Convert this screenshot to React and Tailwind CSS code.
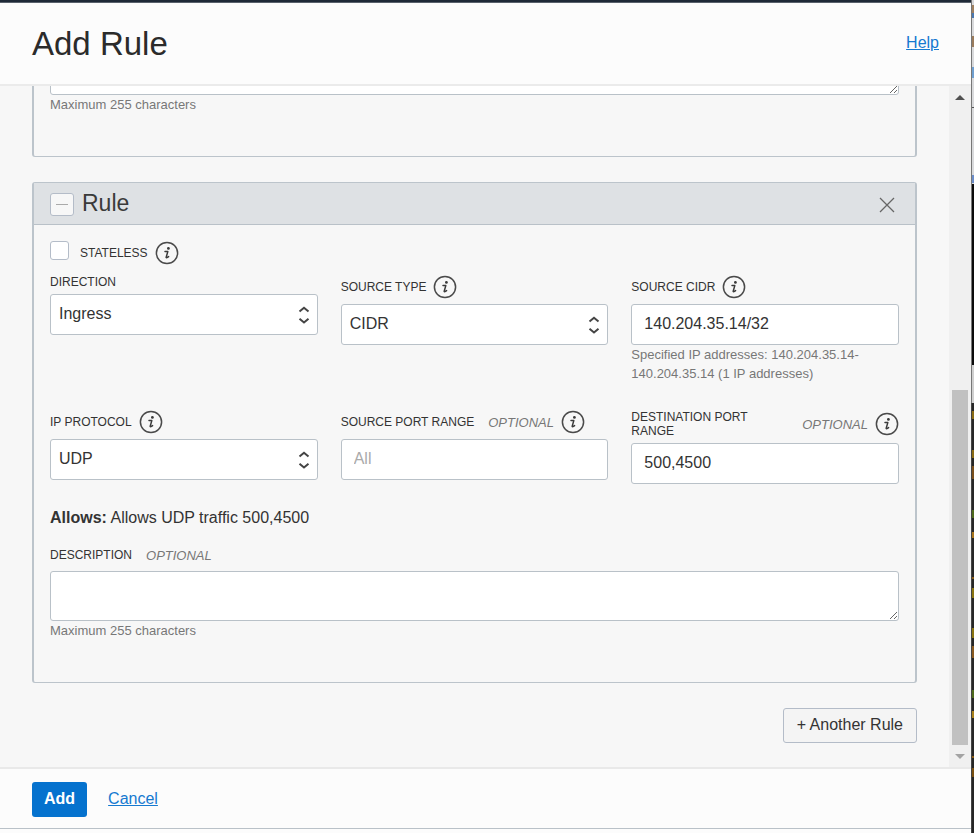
import React from "react";

function InfoButton({ label }) {
  return (
    <button
      type="button"
      aria-label={label}
      className="flex h-6 w-6 shrink-0 items-center justify-center"
    >
      <svg viewBox="0 0 24 24" className="h-6 w-6" aria-hidden="true">
        <circle cx="12" cy="12" r="10.6" fill="none" stroke="#4a4a4a" strokeWidth="1.5" />
        <circle cx="13.4" cy="7.4" r="1.4" fill="#3a3a3a" />
        <path
          d="M10 10.6 H12.8 L11.2 16.2 C11 17 11.8 17 13.6 15.6"
          fill="none"
          stroke="#3a3a3a"
          strokeWidth="1.5"
          strokeLinejoin="round"
          strokeLinecap="round"
        />
      </svg>
    </button>
  );
}

function Optional() {
  return <span className="text-[13px] leading-[15px] text-[#777] italic">OPTIONAL</span>;
}

function Field({ id, label, optional, info, help, children }) {
  return (
    <div>
      <div className="mb-[5px] flex items-center">
        <label htmlFor={id} className="text-xs leading-[14px] text-[#333]">
          {label}
        </label>
        {optional && (
          <span className="ml-3.5 flex">
            <Optional />
          </span>
        )}
        {info && (
          <span className="ml-[7px] flex">
            <InfoButton label={"About " + label.toLowerCase()} />
          </span>
        )}
      </div>
      {children}
      {help && <p className="text-[13px] leading-[19px] text-[#777]">{help}</p>}
    </div>
  );
}

function SelectBox({ id, options }) {
  return (
    <div className="relative">
      <select
        id={id}
        className="block h-[41px] w-full appearance-none rounded-[3px] border border-[#b9c1c8] bg-white pb-0.5 pl-2 text-base text-[#333]"
      >
        {options.map((o) => (
          <option key={o}>{o}</option>
        ))}
      </select>
      <svg
        viewBox="0 0 12 18"
        className="pointer-events-none absolute top-3 right-2 h-[18px] w-3"
        fill="none"
        stroke="#444"
        strokeWidth="2"
      >
        <path d="M1.5 5.5 L6 1.8 L10.5 5.5 M1.5 12.8 L6 16.5 L10.5 12.8" />
      </svg>
    </div>
  );
}

const inputClass =
  "block h-[41px] w-full rounded-[3px] border border-[#b9c1c8] bg-white pb-0.5 pl-3 text-base text-[#333] placeholder:text-[#aaa]";

function Description({ id, label }) {
  return (
    <div>
      <textarea
        id={id}
        aria-label={label}
        className="block h-[50px] w-full resize rounded-[3px] border border-[#b9c1c8] bg-white"
      />
      <p className="text-[13px] leading-[19px] text-[#777]">Maximum 255 characters</p>
    </div>
  );
}

/* Sliver of the window behind the panel: [top, height, colour] */
const backdrop = [
  [0, 184, "#d9dadc"],
  [5, 8, "#a08060"],
  [13, 5, "#4a78b0"],
  [36, 11, "#9a7b5c"],
  [67, 11, "#6f9fd0"],
  [107, 1, "#555"],
  [175, 8, "#6a8cc8"],
  [184, 181, "#0a0a0a"],
  [365, 38, "#cfcfcf"],
  [403, 430, "#262626"],
  [411, 8, "#8a6b14"],
  [450, 8, "#8a6b14"],
  [466, 13, "#7a4f1c"],
  [510, 8, "#4f6a1c"],
  [532, 6, "#a8741a"],
  [577, 2, "#8a5a14"],
  [588, 10, "#8a7410"],
  [628, 10, "#8a7410"],
  [646, 12, "#8a5a20"],
  [690, 8, "#4f6a1c"],
  [711, 7, "#a8801a"],
  [756, 2, "#8a5a14"],
  [768, 9, "#7a5010"],
];

export default function App() {
  return (
    <div className="flex h-screen bg-[#fcfcfc] font-['Liberation_Sans',Arial,sans-serif] text-[#333]">
      <div className="flex min-w-0 flex-1 flex-col">
        <div className="h-[3px] shrink-0 border-b border-[#59616c] bg-[#1f2937]" />
        <header className="flex h-[83px] shrink-0 items-center justify-between border-b-2 border-[#ebebeb] px-8">
          <h1 className="text-[33px] leading-10 text-[#2b2b2b]">Add Rule</h1>
          <a href="#help" className="mb-0.5 text-base text-[#1579d0] underline">
            Help
          </a>
        </header>

        <div className="flex min-h-0 flex-1 bg-[#f7f7f7]">
          <main className="flex min-w-0 flex-1 flex-col justify-end overflow-hidden px-8 pb-6">
            <section className="shrink-0 rounded-[3px] border-x-2 border-y border-[#bcc4cb] px-4 pb-[42px]">
              <Description id="previous-description" label="Previous rule description" />
            </section>

            <section className="mt-[25px] shrink-0 rounded-[3px] border-x-2 border-y border-[#bcc4cb]">
              <div className="flex h-[42px] items-center justify-between border-b border-[#b9c1c8] bg-[#dee1e4] px-4">
                <div className="flex items-center gap-2">
                  <button
                    type="button"
                    aria-label="Collapse rule"
                    className="mt-0.5 flex h-[23px] w-6 items-center justify-center rounded-[3px] border border-[#b4bcc8] bg-[#f7f7f7]"
                  >
                    <span className="h-px w-3 bg-[#aaa]" />
                  </button>
                  <h2 className="mb-0.5 text-[23px] leading-7 text-[#3a3a3a]">Rule</h2>
                </div>
                <button type="button" aria-label="Remove rule" className="mt-0.5 mr-1">
                  <svg viewBox="0 0 16 16" className="h-4 w-4" fill="none" stroke="#666" strokeWidth="1.3">
                    <path d="M1 1 L15 15 M15 1 L1 15" />
                  </svg>
                </button>
              </div>

              <div className="px-4 pt-4 pb-[42px]">
                <div className="mb-2.5 flex h-6 items-center">
                  <input
                    id="stateless"
                    type="checkbox"
                    className="h-[19px] w-[19px] appearance-none self-start rounded-[3px] border border-[#b4bcc8] bg-white"
                  />
                  <label htmlFor="stateless" className="mr-[7px] ml-[11px] text-xs text-[#333]">
                    STATELESS
                  </label>
                  <InfoButton label="About stateless rules" />
                </div>

                <div className="grid grid-cols-3 gap-x-[23px] gap-y-[27px]">
                  <Field id="direction" label="DIRECTION">
                    <SelectBox id="direction" options={["Ingress", "Egress"]} />
                  </Field>
                  <Field id="source-type" label="SOURCE TYPE" info>
                    <SelectBox id="source-type" options={["CIDR", "Service"]} />
                  </Field>
                  <Field
                    id="source-cidr"
                    label="SOURCE CIDR"
                    info
                    help="Specified IP addresses: 140.204.35.14-140.204.35.14 (1 IP addresses)"
                  >
                    <input id="source-cidr" type="text" defaultValue="140.204.35.14/32" className={inputClass} />
                  </Field>
                  <Field id="ip-protocol" label="IP PROTOCOL" info>
                    <SelectBox id="ip-protocol" options={["UDP", "TCP", "ICMP"]} />
                  </Field>
                  <Field id="source-port" label="SOURCE PORT RANGE" optional info>
                    <input id="source-port" type="text" placeholder="All" className={inputClass} />
                  </Field>
                  <Field id="destination-port" label="DESTINATION PORT RANGE" optional info>
                    <input id="destination-port" type="text" defaultValue="500,4500" className={inputClass} />
                  </Field>
                </div>

                <p className="mt-[22px] text-base">
                  <strong>Allows:</strong> Allows UDP traffic 500,4500
                </p>

                <div className="mt-[18px] mb-2 flex items-center gap-3.5">
                  <label htmlFor="description" className="text-xs leading-[15px]">
                    DESCRIPTION
                  </label>
                  <Optional />
                </div>
                <Description id="description" label="Description" />
              </div>
            </section>

            <button
              type="button"
              className="mt-[25px] h-[35px] shrink-0 self-end rounded-[3px] border border-[#b4bcc8] bg-[#f4f4f4] px-[13px] pb-0.5 text-base"
            >
              + Another Rule
            </button>
          </main>

          <div className="flex w-[22px] shrink-0 flex-col items-center bg-[#f0f0f0]">
            <div className="flex h-[22px] items-center">
              <svg viewBox="0 0 10 5" className="h-[5px] w-2.5">
                <path d="M5 0 L10 5 H0 Z" fill="#505050" />
              </svg>
            </div>
            <div className="flex-[282]" />
            <div className="w-4 flex-[355] bg-[#c1c1c1]" />
            <div className="flex h-[22px] items-center">
              <svg viewBox="0 0 10 5" className="h-[5px] w-2.5">
                <path d="M0 0 H10 L5 5 Z" fill="#a3a3a3" />
              </svg>
            </div>
          </div>
        </div>

        <footer className="flex h-[62px] shrink-0 items-center gap-[21px] border-t-2 border-b border-t-[#e9e9e9] border-b-[#b9c1c8] px-8 pt-0.5">
          <button type="button" className="h-[35px] rounded-[3px] bg-[#0572ce] px-3 pb-0.5 text-base font-bold text-white">
            Add
          </button>
          <a href="#cancel" className="mb-0.5 text-base text-[#1579d0] underline">
            Cancel
          </a>
        </footer>
        <div className="h-1 shrink-0" />
      </div>

      <svg viewBox="0 0 3 833" preserveAspectRatio="none" className="h-full w-[3px] shrink-0" aria-hidden="true">
        {backdrop.map(([y, h, fill]) => (
          <rect key={y + "-" + h} x="0" y={y} width="3" height={h} fill={fill} />
        ))}
        <rect x="0" y="0" width="1" height="403" fill="#777" />
        <rect x="0" y="403" width="1" height="430" fill="#444" />
      </svg>
    </div>
  );
}
